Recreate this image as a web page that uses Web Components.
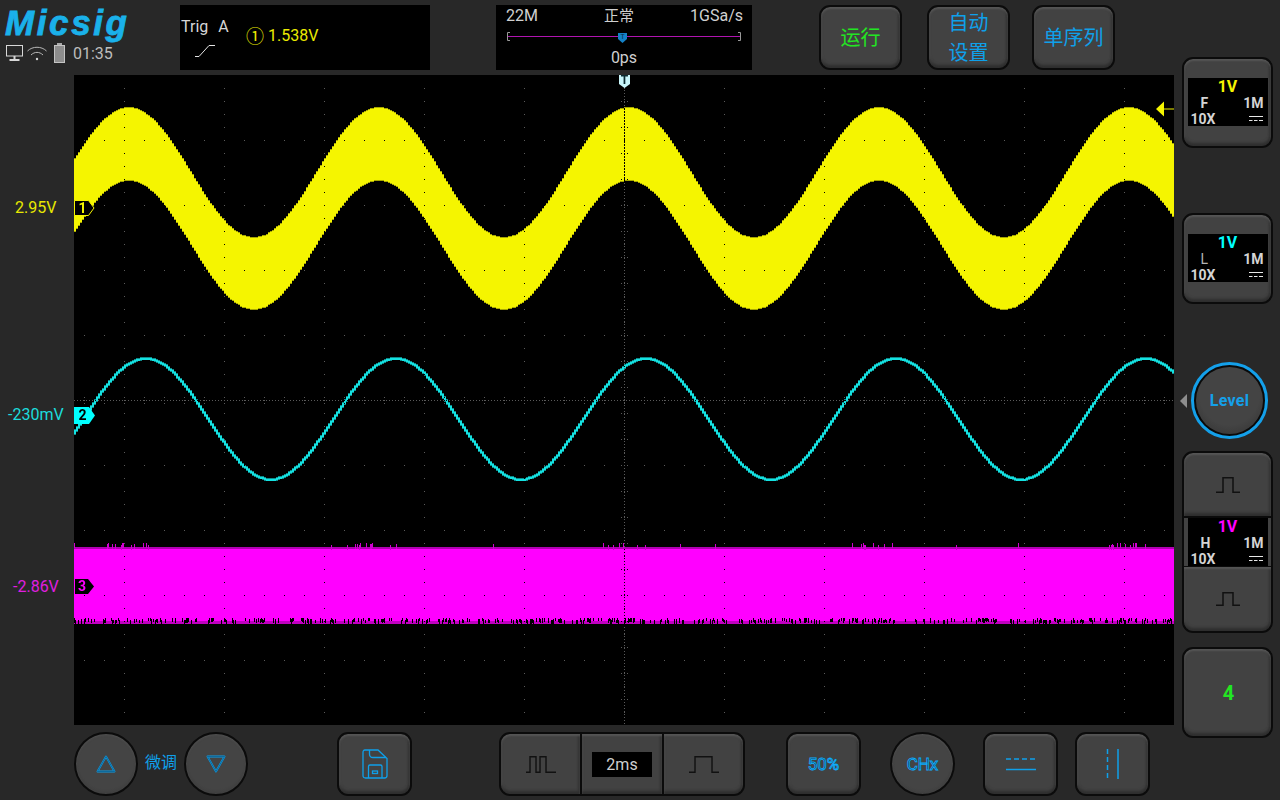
<!DOCTYPE html>
<html>
<head>
<meta charset="utf-8">
<title>Micsig</title>
<style>
  html, body { margin: 0; padding: 0; background: #282828; }
  body { width: 1280px; height: 800px; overflow: hidden; font-family: Roboto, "Noto Sans CJK SC", sans-serif; }
</style>
</head>
<body>
<scope-app></scope-app>

<script>
const BLUE = '#0fa0ea';
const CJK = 'Roboto, "Noto Sans CJK SC", sans-serif';

function tpl(html) {
  const t = document.createElement('template');
  t.innerHTML = html;
  return t;
}

function mount(el, template) {
  el.attachShadow({ mode: 'open' });
  el.shadowRoot.appendChild(template.content.cloneNode(true));
}

/* ---------- button ---------- */
const buttonTpl = tpl(`
  <style>
    :host {
      display: flex;
      flex: none;
      box-sizing: border-box;
      align-items: center;
      justify-content: center;
      text-align: center;
      border: 2px solid #0b0b0b;
      border-radius: 11px;
      background: #424242;
      box-shadow: inset 0 2px 2px #565656, inset 0 -3px 3px #2e2e2e, inset 2px 0 2px #4a4a4a, inset -2px 0 2px #353535;
      color: ${BLUE};
      font-family: ${CJK};
    }
    :host([round]) {
      border-radius: 50%;
      background: radial-gradient(circle at 50% 45%, #444 0 62%, #3c3c3c 80%, #2f2f2f 100%);
      box-shadow: inset 0 1px 2px #505050;
    }
    :host([seg="left"]) { border-radius: 11px 0 0 11px; border-right-width: 1px; }
    :host([seg="mid"]) { border-radius: 0; border-left-width: 1px; border-right-width: 1px; }
    :host([seg="right"]) { border-radius: 0 11px 11px 0; border-left-width: 1px; }
    :host([seg="flat-top"]) { border-radius: 11px 11px 0 0; border-bottom: none; }
    :host([seg="flat-bottom"]) { border-radius: 0 0 11px 11px; border-top-width: 1px; }
  </style>
  <slot></slot>
`);

class ScopeButton extends HTMLElement {
  constructor() {
    super();
    mount(this, buttonTpl);
  }
}
customElements.define('scope-button', ScopeButton);

/* ---------- logo and status ---------- */
const logoTpl = tpl(`
  <style>
    :host { display: block; flex: none; width: 180px; height: 70px; margin-top: -5px; color: #bdbdbd; }
    .logo {
      height: 42px;
      padding-left: 5px;
      font: italic bold 35px/45px "Liberation Sans", sans-serif;
      letter-spacing: 2.6px;
      color: #1ab1ea;
      -webkit-text-stroke: 0.8px #1ab1ea;
    }
    .status { display: flex; align-items: center; height: 22px; padding-left: 6px; }
    svg { display: block; flex: none; }
    .time { margin-left: 8px; font: 16px/20px Roboto, sans-serif; position: relative; top: 1px; }
  </style>
  <div class="logo">Micsig</div>
  <div class="status">
    <svg width="18" height="17" viewBox="0 0 18 17" fill="none" stroke="#d8d8d8">
      <rect x="0.5" y="0.5" width="16" height="10.5"/>
      <path d="M8.5 11v3M3.5 15h10" stroke-width="2"/>
    </svg>
    <svg width="20" height="16" viewBox="0 0 20 16" fill="none" stroke="#b8b8b8" style="margin-left:3px">
      <path d="M0.5 6C5.5 1 14.5 1 19.5 6"/>
      <path d="M4 10C7.5 6.5 12.5 6.5 16 10"/>
      <circle cx="10" cy="14" r="1.2" fill="#d8d8d8" stroke="none"/>
    </svg>
    <svg width="11" height="20" viewBox="0 0 11 20" style="margin-left:7px">
      <rect x="3" y="0" width="5" height="2" fill="#aaa"/>
      <rect x="0.5" y="2.5" width="10" height="17" fill="#8d8d8d" stroke="#c4c4c4"/>
    </svg>
    <span class="time">01:35</span>
  </div>
`);

class ScopeLogo extends HTMLElement {
  constructor() {
    super();
    mount(this, logoTpl);
  }
}
customElements.define('scope-logo', ScopeLogo);

/* ---------- trigger info ---------- */
const trigTpl = tpl(`
  <style>
    :host { display: flex; flex: none; box-sizing: border-box; width: 250px; height: 65px; background: #000; font-family: Roboto, sans-serif; }
    .left { width: 66px; padding: 13px 0 0 1px; color: #d6d6d6; font-size: 16px; line-height: 18px; box-sizing: border-box; }
    .left span + span { margin-left: 10px; }
    .left svg { display: block; margin: 9px 0 0 14px; }
    .value { display: flex; align-items: center; height: 20px; margin-top: 20px; color: #eaea00; font-size: 16px; }
    .mark { font: 18px/20px "Noto Sans CJK SC", sans-serif; margin-right: 4px; }
  </style>
  <div class="left">
    <div><span>Trig</span><span>A</span></div>
    <svg width="20" height="12" viewBox="0 0 20 12" fill="none" stroke="#e4e4e4"><path d="M0 11.5H4L14 0.5H20"/></svg>
  </div>
  <div class="value"><span class="mark">①</span><span>1.538V</span></div>
`);

class TrigInfo extends HTMLElement {
  constructor() {
    super();
    mount(this, trigTpl);
  }
}
customElements.define('trig-info', TrigInfo);

/* ---------- timebase info ---------- */
const timebaseTpl = tpl(`
  <style>
    :host { display: block; flex: none; width: 256px; height: 65px; background: #000; color: #d0d0d0; font: 16px/18px ${CJK}; }
    .top { display: flex; justify-content: space-between; padding: 2px 9px 0 10px; }
    svg { display: block; margin-top: 1px; }
    .pos { text-align: center; margin-top: 3px; }
    .mode { position: relative; left: 5px; font-size: 15px; }
  </style>
  <div class="top"><span>22M</span><span class="mode">正常</span><span>1GSa/s</span></div>
  <svg width="256" height="20" viewBox="1 0 256 20" fill="none">
    <path d="M15 6.5H12.5V14.5H15M243 6.5H245.5V14.5H243" stroke="#999"/>
    <path d="M13 10.5H245" stroke="#b014b0"/>
    <path d="M123 7H132V13L127.500 17L123 13Z" fill="#1482c8"/>
    <text x="127.500" y="13" font-family="Roboto, sans-serif" font-size="7" fill="#052c48" text-anchor="middle">T</text>
  </svg>
  <div class="pos">0ps</div>
`);

class TimebaseInfo extends HTMLElement {
  constructor() {
    super();
    mount(this, timebaseTpl);
  }
}
customElements.define('timebase-info', TimebaseInfo);

/* ---------- header ---------- */
const headerTpl = tpl(`
  <style>
    :host { display: flex; box-sizing: border-box; height: 75px; padding-top: 5px; align-items: flex-start; }
    timebase-info { margin-left: 66px; }
    scope-button { width: 83px; height: 65px; padding-top: 1px; font-size: 20px; line-height: 30px; }
    .run { margin-left: 67px; color: #22e622; }
    .auto { margin-left: 25px; }
    .single { margin-left: 22px; }
  </style>
  <scope-logo></scope-logo>
  <trig-info></trig-info>
  <timebase-info></timebase-info>
  <scope-button class="run">运行</scope-button>
  <scope-button class="auto">自动<br>设置</scope-button>
  <scope-button class="single">单序列</scope-button>
`);

class ScopeHeader extends HTMLElement {
  constructor() {
    super();
    mount(this, headerTpl);
  }
}
customElements.define('scope-header', ScopeHeader);

/* ---------- channel offset labels ---------- */
const labelsTpl = tpl(`
  <style>
    :host { display: block; position: relative; flex: none; width: 74px; height: 650px; font: 16px/18px Roboto, sans-serif; }
    span { position: absolute; white-space: nowrap; }
    .c1 { left: 15px; top: 124px; color: #e8e800; }
    .c2 { left: 8px; top: 331px; color: #1cdcdc; }
    .c3 { left: 13px; top: 503px; color: #e01ee0; }
  </style>
  <span class="c1">2.95V</span>
  <span class="c2">-230mV</span>
  <span class="c3">-2.86V</span>
`);

class ChannelLabels extends HTMLElement {
  constructor() {
    super();
    mount(this, labelsTpl);
  }
}
customElements.define('channel-labels', ChannelLabels);

/* ---------- the waveform screen ---------- */
const screenTpl = tpl(`
  <style>
    :host { display: block; position: relative; flex: none; width: 1100px; height: 650px; background: #000; overflow: hidden; }
    canvas { display: block; }
    .mk { position: absolute; font: bold 14px/15px Roboto, sans-serif; text-align: center; box-sizing: border-box; }
    .mk svg { position: absolute; left: 0; top: 0; }
    .mk b { position: relative; display: block; font-weight: bold; }
    .m1 { left: 0; top: 125px; width: 21px; height: 16px; color: #f5f500; }
    .m1 b { width: 15px; line-height: 16px; margin-left: 1px; }
    .m2 { left: 0; top: 332px; width: 21px; height: 17px; color: #000; }
    .m2 b { width: 15px; line-height: 17px; margin-left: 1px; }
    .m3 { left: 1px; top: 504px; width: 19px; height: 15px; color: #ff00ff; }
    .m3 b { width: 14px; line-height: 15px; }
    .t { left: 545px; top: 0; width: 11px; height: 13px; color: #0a2a30; }
    .t b { font: bold 12px/11px Roboto, sans-serif; }
    .arrow { position: absolute; right: 0; top: 26px; display: block; }
  </style>
  <canvas width="1100" height="650"></canvas>
  <div class="mk m1">
    <svg width="21" height="16" viewBox="0 0 21 16"><path d="M0.5 0.500H14.500L20 8L14.500 15.500H0.500Z" fill="#000" stroke="#f5f500"/></svg>
    <b>1</b>
  </div>
  <div class="mk m2">
    <svg width="21" height="17" viewBox="0 0 21 17"><path d="M0 0H15L21 8.500L15 17H0Z" fill="#00ffff"/></svg>
    <b>2</b>
  </div>
  <div class="mk m3">
    <svg width="19" height="15" viewBox="0 0 19 15"><path d="M0 0H13L19 7.500L13 15H0Z" fill="#000"/></svg>
    <b>3</b>
  </div>
  <div class="mk t">
    <svg width="11" height="13" viewBox="0 0 11 13"><path d="M0 0H11V9L5.500 13L0 9Z" fill="#c8f5fa"/></svg>
    <b>T</b>
  </div>
  <svg class="arrow" width="18" height="16" viewBox="0 0 18 16"><path d="M0 8L8 0.500V7.500H18V8.500H8V15.500Z" fill="#f5f500"/></svg>
`);

class ScopeScreen extends HTMLElement {
  constructor() {
    super();
    mount(this, screenTpl);
  }

  connectedCallback() {
    const ctx = this.shadowRoot.querySelector('canvas').getContext('2d');
    this.drawYellow(ctx);
    this.drawCyan(ctx);
    this.drawMagenta(ctx);
    this.drawGrid(ctx);
  }

  // canvas x is screen x - 74, canvas y is screen y - 75; traces step in 2px columns
  drawYellow(ctx) {
    for (let x = 0; x < 1100; x += 2) {
      const c = Math.cos(2 * Math.PI * (x + 75 - 129) / 250);
      const top = Math.round(173 - 65 * c) - 75;
      const bot = Math.round(244.5 - 64.5 * c) - 75;
      ctx.fillStyle = '#f5f500';
      ctx.fillRect(x, top, 2, bot - top);
      ctx.fillStyle = '#a8a800';
      ctx.fillRect(x, top - 1, 2, 1);
      ctx.fillRect(x, bot, 2, 1);
    }
  }

  drawCyan(ctx) {
    const y = x => Math.round(418.5 - 60.5 * Math.cos(2 * Math.PI * (x + 74 - 146) / 250) - 75);
    for (let x = 0; x < 1100; x += 2) {
      const a = y(x);
      const b = y(x + 2);
      const t = Math.min(a, b);
      const h = Math.abs(a - b) + 2;
      ctx.fillStyle = '#0e8c8c';
      ctx.fillRect(x, t - 1, 2, h + 1);
      ctx.fillStyle = '#14e2e2';
      ctx.fillRect(x, t, 2, Math.max(h - 1, 2));
    }
  }

  drawMagenta(ctx) {
    let seed = 7;
    const rnd = () => (seed = (seed * 16807) % 2147483647) / 2147483647;
    ctx.fillStyle = '#b000b0';
    ctx.fillRect(0, 472, 1100, 2);
    ctx.fillStyle = '#ff00ff';
    ctx.fillRect(0, 474, 1100, 72);
    ctx.fillStyle = '#c000c0';
    ctx.fillRect(0, 546, 1100, 3);
    for (let x = 0; x < 1100; x++) {
      const p = ((x + 74 - 125) % 250 + 250) % 250;
      const near = p < 24 || p > 226;
      if (rnd() < (near ? 0.2 : 0.006)) {
        ctx.fillStyle = '#d000d0';
        ctx.fillRect(x, 472 - Math.ceil(1 + rnd() * 3), 1, 5);
      }
      if (rnd() < 0.4) {
        ctx.fillStyle = '#000';
        ctx.fillRect(x, 543 + Math.floor(rnd() * 3), 1, 3 + Math.floor(rnd() * 3));
      }
    }
  }

  drawGrid(ctx) {
    const dots = [];
    for (let y = 65; y < 650; y += 65) {
      for (let x = 10; x < 1100; x += 20) dots.push([x, y]);
    }
    for (let x = 50; x < 1100; x += 100) {
      for (let y = 13; y < 650; y += 13) dots.push([x, y]);
    }
    for (let y = 0; y < 650; y += 3) dots.push([550, y]);
    for (let x = 0; x < 1100; x += 3) dots.push([x, 325]);
    for (let y = 26; y < 650; y += 26) dots.push([547, y], [553, y]);
    for (let x = 10; x < 1100; x += 20) dots.push([x, 322], [x, 328]);

    // black where a trace lies under the dot, dim grey on the empty screen
    ctx.globalCompositeOperation = 'source-atop';
    ctx.fillStyle = '#000';
    dots.forEach(d => ctx.fillRect(d[0], d[1], 1, 1));
    for (let y = 0; y < 240; y += 3) ctx.fillRect(550, y, 1, 2);
    ctx.globalCompositeOperation = 'destination-over';
    ctx.fillStyle = '#5a5a5a';
    dots.forEach(d => ctx.fillRect(d[0], d[1], 1, 1));
    ctx.globalCompositeOperation = 'source-over';
  }
}
customElements.define('scope-screen', ScopeScreen);

/* ---------- channel readout ---------- */
const readoutTpl = tpl(`
  <style>
    :host {
      display: block;
      box-sizing: border-box;
      width: 80px;
      height: 48px;
      background: #000;
      color: #d4d4d4;
      font: bold 14px/16px Roboto, sans-serif;
    }
    .volts { text-align: center; font-size: 16px; height: 17px; line-height: 18px; color: var(--ch); }
    .row { display: flex; justify-content: space-between; align-items: center; height: 16px; padding: 0 4px 0 3px; }
    .letter { margin-left: 10px; }
    :host([thin]) .letter { font-weight: normal; color: #b4b4b4; }
    svg { display: block; margin-right: 1px; }
  </style>
  <div class="volts"><slot name="volts">1V</slot></div>
  <div class="row"><span class="letter"><slot></slot></span><span>1M</span></div>
  <div class="row">
    <span>10X</span>
    <svg width="14" height="6" viewBox="0 0 14 6" fill="none" stroke="#e8e8e8"><path d="M0 0.500H14"/><path d="M0 4.500H3.500M5 4.500H8.500M10 4.500H14"/></svg>
  </div>
`);

class ChannelReadout extends HTMLElement {
  constructor() {
    super();
    mount(this, readoutTpl);
  }
}
customElements.define('channel-readout', ChannelReadout);

/* ---------- right rail ---------- */
const railTpl = tpl(`
  <style>
    :host { display: flex; flex-direction: column; flex: none; box-sizing: border-box; width: 106px; height: 800px; padding: 57px 0 0 8px; }
    .card { width: 91px; height: 91px; padding-bottom: 1px; box-sizing: border-box; }
    .ch2 { margin-top: 65px; }
    .level { display: flex; align-items: center; margin-top: 58px; height: 77px; }
    .level i { display: block; width: 0; height: 0; margin-left: -2px; border: 7px solid transparent; border-left: none; border-right-color: #8e8e8e; }
    .knob {
      box-sizing: border-box;
      margin-left: 4px;
      width: 77px;
      height: 77px;
      padding: 2px;
      border: 3px solid #14a0ea;
      border-radius: 50%;
      background: #0a0a0a;
    }
    .knob div {
      display: flex;
      align-items: center;
      justify-content: center;
      height: 100%;
      border-radius: 50%;
      background: radial-gradient(circle at 50% 42%, #444 0 58%, #3a3a3a 78%, #222 100%);
      color: #14a0ea;
      font: bold 16px Roboto, sans-serif;
      letter-spacing: 0.3px;
    }
    .stack { display: flex; flex-direction: column; box-sizing: border-box; width: 91px; height: 182px; margin-top: 12px; }
    .stack scope-button { width: 91px; }
    .up { height: 67px; }
    .mid { display: flex; justify-content: center; height: 48px; background: #424242; border-left: 2px solid #0b0b0b; border-right: 2px solid #0b0b0b; }
    .down { height: 67px; }
    .four { width: 91px; height: 91px; margin-top: 14px; padding-left: 2px; color: #22e622; font: bold 20px Roboto, sans-serif; }
  </style>
  <scope-button class="card" style="color:#f5f500"><channel-readout>F</channel-readout></scope-button>
  <scope-button class="card ch2" style="color:#00ffff"><channel-readout thin>L</channel-readout></scope-button>
  <div class="level"><i></i><div class="knob"><div>Level</div></div></div>
  <div class="stack" style="color:#ff00ff">
    <scope-button seg="flat-top" class="up" style="border-bottom:2px solid #0b0b0b">
      <svg width="24" height="16" viewBox="0 0 24 16" fill="none" stroke="#111" stroke-width="1.500"><path d="M0 15.250H7V0.750H17V15.250H24"/></svg>
    </scope-button>
    <div class="mid"><channel-readout>H</channel-readout></div>
    <scope-button seg="flat-bottom" class="down">
      <svg width="24" height="14" viewBox="0 0 24 14" fill="none" stroke="#111" stroke-width="1.500"><path d="M0 13.250H7V0.750H17V13.250H24"/></svg>
    </scope-button>
  </div>
  <scope-button class="four">4</scope-button>
`);

class ScopeRail extends HTMLElement {
  constructor() {
    super();
    mount(this, railTpl);
  }
  connectedCallback() {
    // the readout takes its trace colour from the card around it
    this.shadowRoot.querySelectorAll('channel-readout').forEach(r => {
      const owner = r.parentElement.closest('.card, .stack');
      r.style.setProperty('--ch', owner.style.color);
    });
  }
}
customElements.define('scope-rail', ScopeRail);

/* ---------- footer ---------- */
const footerTpl = tpl(`
  <style>
    :host { display: flex; box-sizing: border-box; height: 75px; padding: 7px 0 0 74px; align-items: flex-start; color: ${BLUE}; }
    scope-button { height: 64px; }
    .rd { width: 64px; }
    .fine { flex: none; width: 46px; height: 64px; text-align: center; font: 16px/62px ${CJK}; }
    .save { width: 75px; margin-left: 89px; }
    .time { display: flex; margin-left: 87px; }
    .time scope-button { width: 82px; }
    .display { display: block; width: 60px; height: 25px; background: #000; color: #d0d0d0; font: 16px/25px Roboto, sans-serif; text-align: center; }
    .pct { width: 75px; margin-left: 41px; }
    .chx { width: 65px; margin-left: 29px; }
    .h { width: 75px; margin-left: 28px; }
    .v { width: 75px; margin-left: 17px; }
    .hollow { font: 17px Roboto, sans-serif; color: #10222e; -webkit-text-stroke: 0.9px #12acfa; }
    svg { display: block; }
  </style>
  <scope-button round class="rd">
    <svg width="20" height="18" viewBox="0 0 20 18" fill="none" stroke-linejoin="round">
      <path d="M10 1.500L18.500 16.500H1.500Z" stroke="${BLUE}" stroke-width="1.800"/>
      <path d="M10 1.500L18.500 16.500H1.500Z" stroke="#0a3550" stroke-width="0.500"/>
    </svg>
  </scope-button>
  <span class="fine">微调</span>
  <scope-button round class="rd">
    <svg width="20" height="18" viewBox="0 0 20 18" fill="none" stroke-linejoin="round">
      <path d="M10 16.500L18.500 1.500H1.500Z" stroke="${BLUE}" stroke-width="1.800"/>
      <path d="M10 16.500L18.500 1.500H1.500Z" stroke="#0a3550" stroke-width="0.500"/>
    </svg>
  </scope-button>
  <scope-button class="save">
    <svg width="26" height="30" viewBox="0 0 26 30" fill="none" stroke="${BLUE}" stroke-width="1.300">
      <path d="M3 1H16L25 9.500V26.500Q25 29 22.500 29H3.500Q1 29 1 26.500V3.500Q1 1 3 1Z"/>
      <path d="M7.500 1V5Q7.500 8.500 11 8.500H24"/>
      <path d="M6.500 29V17.500Q6.500 16 8 16H18.500Q20 16 20 17.500V29"/>
      <rect x="10.500" y="22" width="5" height="2.500"/>
    </svg>
  </scope-button>
  <div class="time">
    <scope-button seg="left">
      <svg width="30" height="17" viewBox="0 0 30 17" fill="none" stroke="#111" stroke-width="1.400"><path d="M0 16.300H4V0.700H10V16.300H14V0.700H20V16.300H26H30"/></svg>
    </scope-button>
    <scope-button seg="mid"><span class="display">2ms</span></scope-button>
    <scope-button seg="right">
      <svg width="30" height="17" viewBox="0 0 30 17" fill="none" stroke="#111" stroke-width="1.400"><path d="M0 16.300H6V0.700H23V16.300H30"/></svg>
    </scope-button>
  </div>
  <scope-button class="pct"><span class="hollow">50%</span></scope-button>
  <scope-button round class="chx"><span class="hollow">CHx</span></scope-button>
  <scope-button class="h">
    <svg width="30" height="14" viewBox="0 0 30 14" fill="none" stroke="${BLUE}" stroke-width="1.500"><path d="M0 2H30" stroke-dasharray="5 3"/><path d="M0 12.500H30"/></svg>
  </scope-button>
  <scope-button class="v">
    <svg width="14" height="30" viewBox="0 0 14 30" fill="none" stroke="${BLUE}" stroke-width="1.500"><path d="M1.500 0V30" stroke-dasharray="5 3"/><path d="M12 0V30"/></svg>
  </scope-button>
`);

class ScopeFooter extends HTMLElement {
  constructor() {
    super();
    mount(this, footerTpl);
  }
}
customElements.define('scope-footer', ScopeFooter);

/* ---------- page ---------- */
const appTpl = tpl(`
  <style>
    :host { display: flex; width: 1280px; height: 800px; background: #282828; overflow: hidden; }
    .main { width: 1174px; flex: none; }
    .mid { display: flex; }
  </style>
  <div class="main">
    <scope-header></scope-header>
    <div class="mid"><channel-labels></channel-labels><scope-screen></scope-screen></div>
    <scope-footer></scope-footer>
  </div>
  <scope-rail></scope-rail>
`);

class ScopeApp extends HTMLElement {
  constructor() {
    super();
    mount(this, appTpl);
  }
}
customElements.define('scope-app', ScopeApp);
</script>
</body>
</html>
